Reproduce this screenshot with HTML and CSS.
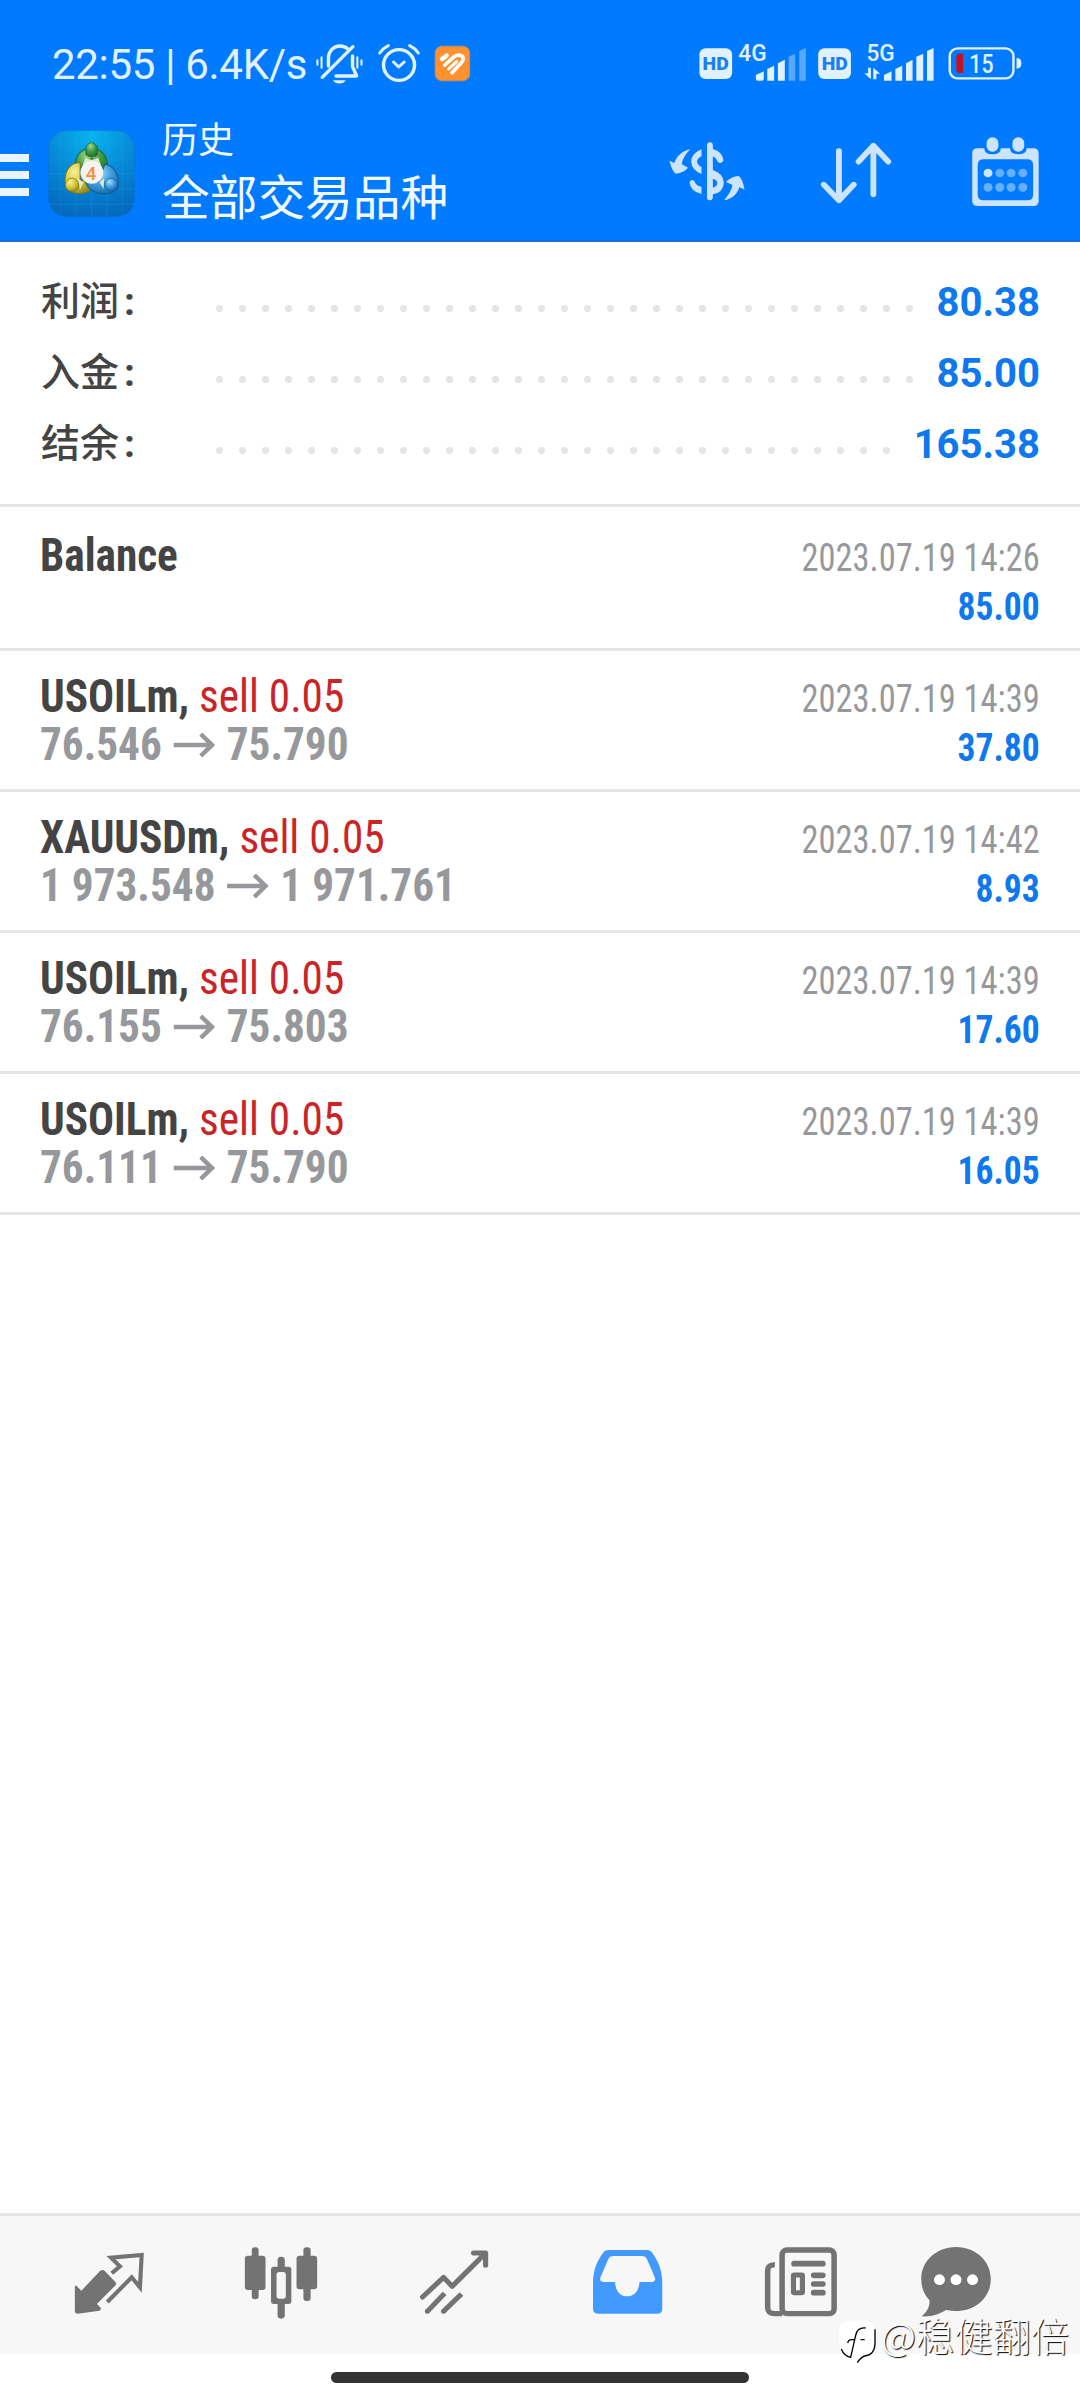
FILE: index.html
```html
<!DOCTYPE html>
<html lang="zh-CN">
<head>
<meta charset="utf-8">
<title>历史</title>
<link rel="stylesheet" href="styles.css">
</head>
<body>
<div class="screen">
  <header class="header">
    <div class="status">
      <span class="clock">22:55 | 6.4K/s</span>
      <svg class="status-left" viewBox="915 60 455 141" preserveAspectRatio="none" fill="none" stroke="#e2f1ff" stroke-linecap="round">
        <path d="M954 138V116C954 92 970 78 987 78C998 78 1006 82 1012 88M1024 108V140L1036 168H976" stroke-width="10" stroke-linejoin="round"/>
        <path d="M936 172L1025 80" stroke-width="10"/>
        <path d="M922 121V134M934 112V143M1038 112V143M1050 121V134" stroke-width="6"/>
        <path d="M967 181H1004C998 194 974 194 967 181Z" fill="#e2f1ff" stroke="none"/>
        <ellipse cx="1159" cy="135" rx="45" ry="46" stroke-width="10"/>
        <path d="M1143 126L1158 141L1174 126" stroke-width="9" stroke-linejoin="round"/>
        <path d="M1103 99Q1112 85 1128 77M1215 99Q1206 85 1190 77" stroke-width="9"/>
        <rect x="1264" y="79" width="100" height="103" rx="20" fill="#ff922f" stroke="#c98b62" stroke-width="3"/>
        <path d="M1284 117L1297 107" stroke="#fff" stroke-width="13"/>
        <path d="M1292 135L1318 111Q1331 101 1343 109Q1348 119 1339 129L1313 158" stroke="#fff" stroke-width="11" stroke-linejoin="round"/>
        <path d="M1303 147L1326 125" stroke="#fff" stroke-width="9"/>
      </svg>
      <svg class="status-right" viewBox="455 60 945 141" preserveAspectRatio="none" fill="#e2f1ff">
        <rect x="462" y="85" width="95" height="92" rx="18"/>
        <rect x="807" y="85" width="95" height="92" rx="18"/>
        <g class="hd">
          <text x="471" y="149" textLength="76" lengthAdjust="spacingAndGlyphs">HD</text>
          <text x="817" y="149" textLength="76" lengthAdjust="spacingAndGlyphs">HD</text>
        </g>
        <g class="net">
          <text x="575" y="124" textLength="82" lengthAdjust="spacingAndGlyphs">4G</text>
          <text x="947" y="124" textLength="82" lengthAdjust="spacingAndGlyphs">5G</text>
        </g>
        <path d="M626 165L649 154V176Q649 182 643 182H632Q626 182 626 176ZM659 147L679 137V182H659ZM690 130L710 119V182H690Z"/>
        <path d="M721 110L740 101V182H721ZM752 93L771 84V182H752Z" fill="#59aaff"/>
        <path d="M998 165L1020 154V182H998ZM1031 147L1051 137V182H1031ZM1062 130L1081 119V182H1062ZM1092 110L1112 101V182H1092ZM1123 93L1142 84V182H1123Z"/>
        <path d="M952 143H960V178L941 160H952ZM967 178V143L987 161H976V178Z"/>
        <rect x="1189" y="85" width="185" height="90" rx="23" fill="none" stroke="#e2f1ff" stroke-width="7"/>
        <path d="M1383 114Q1397 114 1397 130Q1397 146 1383 146Z"/>
        <path d="M1228 101V159H1217Q1208 159 1208 148V112Q1208 101 1217 101Z" fill="#c41224"/>
        <text class="level" x="1246" y="159" textLength="70" lengthAdjust="spacingAndGlyphs">15</text>
      </svg>
    </div>
    <div class="appbar">
      <div class="menu"><i></i><i></i><i></i></div>
      <svg class="logo" viewBox="54 60 260 260">
        <defs>
          <radialGradient id="bg" cx=".5" cy=".05" r="1"><stop offset="0" stop-color="#08b4ec"/><stop offset=".5" stop-color="#0689d8"/><stop offset="1" stop-color="#0567ba"/></radialGradient>
          <radialGradient id="gr" cx=".4" cy=".25" r=".8"><stop offset="0" stop-color="#a5d88f"/><stop offset=".5" stop-color="#3f9a45"/><stop offset="1" stop-color="#1d6a2c"/></radialGradient>
          <radialGradient id="ye" cx=".35" cy=".3" r=".8"><stop offset="0" stop-color="#f7f0a0"/><stop offset=".5" stop-color="#d8c733"/><stop offset="1" stop-color="#8d8420"/></radialGradient>
          <radialGradient id="bl" cx=".4" cy=".3" r=".8"><stop offset="0" stop-color="#a6defa"/><stop offset=".5" stop-color="#3a9cdc"/><stop offset="1" stop-color="#14619f"/></radialGradient>
        </defs>
        <rect x="55" y="61" width="258" height="258" rx="54" fill="url(#bg)" stroke="#0b70d4" stroke-width="2"/>
        <path d="M92 62V318M138 62V318M184 62V318M230 62V318M276 62V318M56 98H312M56 144H312M56 190H312M56 236H312M56 282H312" stroke="#4fb8ee" stroke-opacity=".22" stroke-width="2"/>
        <path d="M135 176C134 139 150 116 184 114C220 116 240 148 228 188L204 204L206 166L184 144L164 170Z" fill="url(#gr)" stroke="#1c6530" stroke-width="3"/>
        <path d="M150 157C118 157 100 186 106 226C116 252 154 256 179 242L186 218L150 210Z" fill="url(#ye)" stroke="#77751e" stroke-width="3"/>
        <path d="M224 162C252 165 268 195 264 230C252 258 184 262 166 216L204 216Z" fill="url(#bl)" stroke="#135b94" stroke-width="3"/>
        <path d="M166 142Q184 156 204 142L212 165H158ZM142 204L160 216L150 238ZM222 204L208 216L220 236Z" fill="#dcebc5"/>
        <path d="M167 111Q184 84 202 111V134Q184 148 167 134Z" fill="url(#gr)" stroke="#1c6530" stroke-width="2"/>
        <circle cx="126" cy="224" r="20" fill="url(#ye)" stroke="#77751e" stroke-width="2"/>
        <circle cx="242" cy="223" r="19" fill="url(#bl)" stroke="#135b94" stroke-width="2"/>
        <circle cx="185" cy="187" r="34" fill="#f6f3f2"/>
        <text x="167" y="208" class="four">4</text>
      </svg>
      <div class="titles">
        <div class="title">历史</div>
        <div class="subtitle">全部交易品种</div>
      </div>
      <div class="actions">
        <svg viewBox="368.8 335 232.3 240" preserveAspectRatio="none" fill="#cce4ff">
          <path d="M436 387C420 405 413 420 412 432L430 442Q418 457 393 460Q382 448 376 421L390 428C397 407 414 391 436 387Z"/>
          <path d="M535 540C548 522 558 506 559 494L540 485Q556 469 577 467Q588 475 594 508L579 500C574 520 558 536 535 540Z"/>
          <path d="M469 387V408Q457 414 456 424Q457 433 469 440V461Q440 448 439 424Q440 398 469 387ZM469 499V521Q437 514 434 485Q443 474 449 484Q455 498 469 499Z"/>
          <path d="M493 366Q502 366 502 376V386Q530 394 533 420Q527 434 516 424Q512 412 502 408V449Q533 460 534 487Q532 517 502 522V532Q500 540 493 540Q485 539 485 532V376Q485 367 493 366ZM502 475V502Q515 498 515 488Q514 478 502 475Z" fill-rule="evenodd"/>
        </svg>
        <svg viewBox="801.4 335 232.3 240" preserveAspectRatio="none" fill="none" stroke="#cce4ff" stroke-width="17" stroke-linecap="round" stroke-linejoin="round">
          <path d="M868 392V538M824 493L868 540L911 493M968 522V378M925 424L968 376L1011 424"/>
        </svg>
        <svg viewBox="1234.1 335 232.3 240" preserveAspectRatio="none" fill="#cce4ff">
          <path d="M1271 384H1290Q1290 402 1314 402Q1338 402 1338 384H1365Q1365 402 1389 402Q1413 402 1413 384H1432Q1448 384 1448 400V542Q1448 557 1432 557H1271Q1255 557 1255 542V400Q1255 384 1271 384ZM1288 417Q1271 417 1271 434V523Q1271 540 1288 540H1415Q1432 540 1432 523V434Q1432 417 1415 417Z" fill-rule="evenodd"/>
          <rect x="1297" y="351" width="34" height="43" rx="16"/><rect x="1372" y="351" width="34" height="43" rx="16"/>
          <circle cx="1301" cy="458" r="13"/>
          <g fill="#66b0ff"><circle cx="1335" cy="458" r="13"/><circle cx="1368" cy="458" r="13"/><circle cx="1402" cy="458" r="13"/><circle cx="1301" cy="501" r="13"/><circle cx="1335" cy="501" r="13"/><circle cx="1368" cy="501" r="13"/><circle cx="1402" cy="501" r="13"/></g>
        </svg>
      </div>
    </div>
  </header>

  <section class="summary">
    <div class="sum-row"><span class="label">利润<b>:</b></span><span class="dots"></span><span class="total">80.38</span></div>
    <div class="sum-row"><span class="label">入金<b>:</b></span><span class="dots"></span><span class="total">85.00</span></div>
    <div class="sum-row"><span class="label">结余<b>:</b></span><span class="dots"></span><span class="total">165.38</span></div>
  </section>

  <main class="deals">
    <div class="deal first">
      <div class="info"><div class="name">Balance</div></div>
      <div class="side"><div class="date">2023.07.19 14:26</div><div class="profit">85.00</div></div>
    </div>
    <div class="deal">
      <div class="info"><div class="name">USOILm, <span class="sell">sell 0.05</span></div>
        <div class="prices">76.546<svg class="arrow" viewBox="0 0 44 24"><path d="M0 12H41M29 1L41 12L29 23"/></svg>75.790</div></div>
      <div class="side"><div class="date">2023.07.19 14:39</div><div class="profit">37.80</div></div>
    </div>
    <div class="deal">
      <div class="info"><div class="name">XAUUSDm, <span class="sell">sell 0.05</span></div>
        <div class="prices">1 973.548<svg class="arrow" viewBox="0 0 44 24"><path d="M0 12H41M29 1L41 12L29 23"/></svg>1 971.761</div></div>
      <div class="side"><div class="date">2023.07.19 14:42</div><div class="profit">8.93</div></div>
    </div>
    <div class="deal">
      <div class="info"><div class="name">USOILm, <span class="sell">sell 0.05</span></div>
        <div class="prices">76.155<svg class="arrow" viewBox="0 0 44 24"><path d="M0 12H41M29 1L41 12L29 23"/></svg>75.803</div></div>
      <div class="side"><div class="date">2023.07.19 14:39</div><div class="profit">17.60</div></div>
    </div>
    <div class="deal">
      <div class="info"><div class="name">USOILm, <span class="sell">sell 0.05</span></div>
        <div class="prices">76.111<svg class="arrow" viewBox="0 0 44 24"><path d="M0 12H41M29 1L41 12L29 23"/></svg>75.790</div></div>
      <div class="side"><div class="date">2023.07.19 14:39</div><div class="profit">16.05</div></div>
    </div>
  </main>

  <nav class="tabs">
    <svg viewBox="200 165 232.3 240" preserveAspectRatio="none">
      <path d="M290 243Q297 237 304 243L334 275Q340 281 334 287L281 342L292 353Q294 360 288 362L226 371Q217 371 217 363V288Q220 286 222 288L236 302Z" fill="#737373"/>
      <path d="M311 336L382 262L406 292L411 195L322 203L348 229L324 250" fill="none" stroke="#737373" stroke-width="12"/>
    </svg>
    <svg viewBox="702.7 165 232.3 240" preserveAspectRatio="none" fill="#737373">
      <rect x="711" y="197" width="60" height="103" rx="9"/><rect x="731" y="172" width="20" height="156" rx="9"/>
      <rect x="861" y="197" width="60" height="101" rx="9"/><rect x="881" y="172" width="21" height="161" rx="9"/>
      <path d="M806 236V210Q806 200 816.500 200Q827 200 827 210V236ZM806 336V376Q806 386 816.500 386Q827 386 827 376V336Z"/>
      <path d="M795 230H838Q846 230 846 238V334Q846 342 838 342H795Q787 342 787 334V238Q787 230 795 230ZM811 246Q803 246 803 255V317Q803 326 811 326H822Q830 326 830 317V255Q830 246 822 246Z" fill-rule="evenodd"/>
    </svg>
    <svg viewBox="1205 165 232.3 240" preserveAspectRatio="none" fill="none" stroke="#737373" stroke-width="15" stroke-linejoin="round">
      <path d="M1227 321L1288 262L1313 289L1408 191M1375 189H1410V226" stroke-linecap="round"/>
      <path d="M1291 310L1241 364M1340 312L1288 364"/><path d="M1241 364h.1M1288 364h.1" stroke-linecap="round"/>
    </svg>
    <svg viewBox="139.4 165 232.3 240" preserveAspectRatio="none" fill="#429aff">
      <path d="M198 180H311Q319 180 324 186C345 214 355 244 355 278V356Q355 371 340 371H170Q154 371 154 356V278C154 244 164 214 185 186Q190 180 198 180ZM218 198C204 198 201 200 196 213L175 263Q172 275 184 276H218C219 305 234 319 253 319C273 319 287 304 289 276H324Q337 275 334 263L313 213C308 200 305 198 291 198Z" fill-rule="evenodd"/>
    </svg>
    <svg viewBox="641.7 165 232.3 240" preserveAspectRatio="none" fill="none" stroke="#737373" stroke-width="16">
      <rect x="703" y="180" width="151" height="191" rx="14"/>
      <path d="M682 225C668 224 661 229 661 244V352C661 366 668 371 682 371H703"/>
      <path d="M738 221H821M795 256H821M795 282H821M795 308H821" stroke-width="17" stroke-linecap="round"/>
      <rect x="736" y="255" width="26" height="53" stroke-width="15" rx="2"/>
    </svg>
    <svg viewBox="1091.8 165 232.3 240" preserveAspectRatio="none" fill="#737373">
      <path d="M1208 171C1265 171 1309 213 1309 267C1309 330 1252 376 1179 360C1155 375 1135 381 1108 379C1124 365 1132 350 1131 331C1116 314 1107 293 1107 267C1107 213 1151 171 1208 171Z"/>
      <g fill="#fff"><circle cx="1160" cy="269" r="16"/><circle cx="1208" cy="269" r="16"/><circle cx="1256" cy="269" r="16"/></g>
    </svg>
  </nav>
  <div class="gesture"><i></i></div>

  <div class="watermark">
    <svg viewBox="21 24 126 144">
      <path d="M62 32H101Q134 32 134 66V100Q134 133 103 135Q86 138 81 153L78 136Q27 136 27 100V66Q27 32 62 32Z" fill="#fff"/>
      <path d="M135 58V102Q133 136 104 138Q92 142 82 158" fill="none" stroke="#000" stroke-width="4"/>
      <path d="M34 117Q42 138 62 142L77 76Q82 51 107 54M53 99Q55 89 66 89H75M92 89H104" fill="none" stroke="#000" stroke-width="4"/>
    </svg>
    <span>@稳健翻倍</span>
  </div>
</div>
</body>
</html>
```
FILE: styles.css
```css
* { box-sizing: border-box; }
body { margin: 0; background: #fff; font-family: Roboto, "Noto Sans CJK SC", sans-serif; }
.screen { position: relative; width: 1080px; height: 2400px; display: flex; flex-direction: column; overflow: hidden; background: #fff; }
svg { display: block; flex: none; }

.header { height: 242px; flex: none; background: #007aff; border-bottom: 2px solid #1b6fd3; }
.status { height: 87px; padding-top: 40px; display: flex; align-items: flex-start; color: #e2f1ff; }
.clock { width: 263px; margin-left: 52px; font-size: 42px; line-height: 50px; font-weight: 450; letter-spacing: -0.3px; white-space: nowrap; }
.status-left { width: 156.7px; height: 47px; }
.status-right { width: 325.4px; height: 47px; margin-left: 225px; }
.hd { fill: #1c80ee; font: 900 53px Roboto, sans-serif; }
.net { font: 500 69px Roboto, sans-serif; }
.level { font: 500 75px Roboto, sans-serif; }

.appbar { height: 153px; display: flex; align-items: flex-start; color: #f2f9ff; }
.menu { width: 29px; margin-top: 67px; display: flex; flex-direction: column; gap: 9px; }
.menu i { height: 8px; background: #e8f4ff; }
.logo { width: 87px; height: 87px; margin: 43px 0 0 19px; }
.four { font: 500 56px Roboto, sans-serif; fill: #f2913d; }
.titles { margin: 32px 0 0 27px; flex: 1; }
.title { font-size: 36px; line-height: 44px; }
.subtitle { font-size: 47.7px; line-height: 60px; margin-top: 6px; }
.actions { display: flex; gap: 69px; margin: 44.7px 35px 0 0; }
.actions svg { width: 80px; height: 80px; }

.summary { height: 265px; flex: none; padding: 25px 40px 0; border-bottom: 3px solid #e5e5e5; }
.sum-row { height: 71px; display: flex; align-items: center; }
.label { width: 168px; padding-left: 1px; font-size: 39px; line-height: 71px; color: #444; font-weight: 500; }
.label b { margin-left: 5px; }
.dots { flex: 1; height: 7px; margin: 11px 12px 0 0; background: radial-gradient(circle at 11.5px 3.5px, #e5e5e5 3.2px, transparent 4px) 0 0 / 23px 7px repeat-x; }
.total { font-size: 40px; font-weight: 700; color: #0e78ee; }

.deals { flex: 1; font-family: "Roboto Condensed", Roboto, sans-serif; font-stretch: 75%; }
.deal { height: 141px; padding: 18px 40px 0; display: flex; justify-content: space-between; border-bottom: 3px solid #e5e5e5; }
.deal.first { height: 144px; padding-top: 21px; }
.info { transform: scaleX(.94); transform-origin: left; }
.name { font-size: 46px; line-height: 54px; font-weight: 700; color: #444; white-space: nowrap; }
.sell { font-weight: 400; color: #cb2427; }
.prices { display: flex; align-items: center; font-size: 46px; line-height: 49px; font-weight: 700; color: #97989c; margin-top: -3px; }
.arrow { width: 44px; height: 24px; margin: 0 13px 0 12px; fill: none; stroke: #97989c; stroke-width: 4.5; }
.side { text-align: right; padding-top: 5px; white-space: nowrap; }
.date { font-size: 39px; line-height: 50px; color: #97989c; transform: scaleX(.883); transform-origin: right; }
.profit { font-size: 38px; line-height: 48px; font-weight: 700; color: #0e78ee; transform: scaleX(.935); transform-origin: right; }

.tabs { height: 141px; flex: none; border-top: 3px solid #e5e5e5; background: #f7f7f7; padding-left: 22.5px; display: grid; grid-template-columns: repeat(5, 173px) 137px; justify-items: center; align-items: start; padding-top: 29px; }
.tabs svg { width: 80px; height: 80px; }
.gesture { height: 46px; flex: none; padding-top: 18px; }
.gesture i { display: block; width: 418px; height: 11px; margin: 0 auto; border-radius: 6px; background: #333; }

.watermark { position: absolute; left: 837px; top: 2318px; display: flex; color: #fff; }
.watermark svg { width: 42px; height: 48px; }
.watermark span { margin: -5px 0 0 2px; font: 300 38.3px/44px "Noto Sans CJK SC", sans-serif; white-space: nowrap; text-shadow: 1px 1px 1px #000; }
```
